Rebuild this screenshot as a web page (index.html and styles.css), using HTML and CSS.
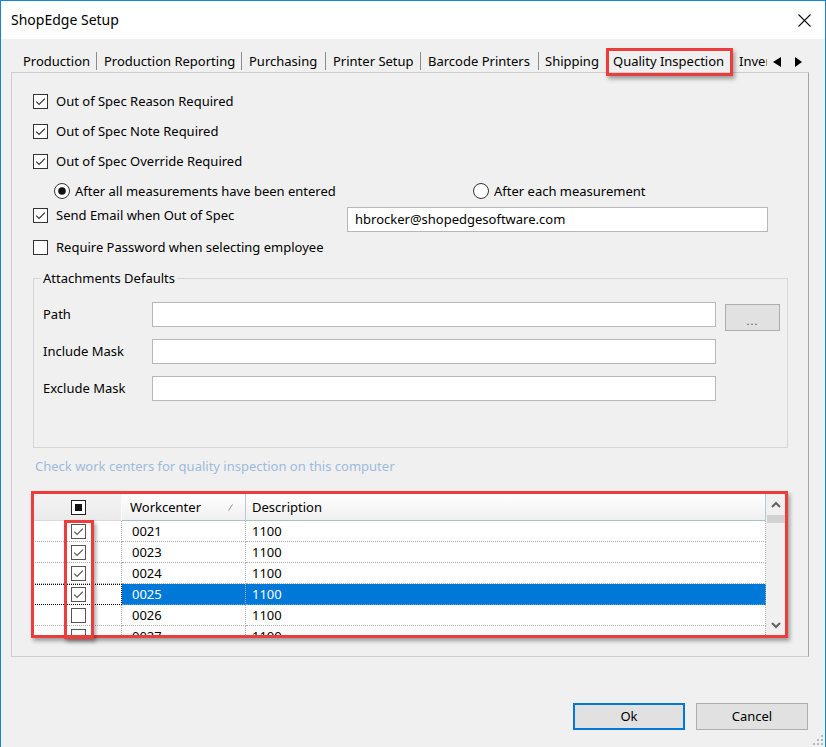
FILE: index.html
```html
<!DOCTYPE html>
<html>
<head>
<meta charset="utf-8">
<title>ShopEdge Setup</title>
<link rel="stylesheet" href="styles.css">
</head>
<body>
<div class="window">
  <div class="titlebar">
    <span class="title">ShopEdge Setup</span>
    <svg class="close" width="13" height="13" viewBox="0 0 13 13"><path d="M0.5 0.5L12.5 12.5M12.5 0.5L0.5 12.5" stroke="#111" stroke-width="1.1" fill="none"/></svg>
  </div>
  <div class="client">
    <div class="tabstrip">
      <div class="tabs">
        <div class="tab t1">Production</div>
        <div class="tab t2">Production Reporting</div>
        <div class="tab t3">Purchasing</div>
        <div class="tab t4">Printer Setup</div>
        <div class="tab t5">Barcode Printers</div>
        <div class="tab t6">Shipping</div>
        <div class="tab t7 sel">Quality Inspection<span class="mark mark-tab"></span></div>
        <div class="tab t8">Inventory</div>
      </div>
      <div class="tab-arrows">
        <svg width="8" height="10" viewBox="0 0 8 10"><polygon points="8,0 8,10 0,5" fill="#000"/></svg>
        <svg width="7" height="10" viewBox="0 0 7 10"><polygon points="0,0 0,10 7,5" fill="#000"/></svg>
      </div>
    </div>

    <div class="tabpage">
      <div class="opt">
        <span class="chk-label">
          <svg class="chk" width="15" height="15" viewBox="0 0 15 15"><rect x="0.5" y="0.5" width="14" height="14" fill="#fff" stroke="#333"/><path d="M3.2 7.6l2.9 2.9 5.8-5.8" fill="none" stroke="#333" stroke-width="1.2"/></svg>
          Out of Spec Reason Required
        </span>
      </div>
      <div class="opt">
        <span class="chk-label">
          <svg class="chk" width="15" height="15" viewBox="0 0 15 15"><rect x="0.5" y="0.5" width="14" height="14" fill="#fff" stroke="#333"/><path d="M3.2 7.6l2.9 2.9 5.8-5.8" fill="none" stroke="#333" stroke-width="1.2"/></svg>
          Out of Spec Note Required
        </span>
      </div>
      <div class="opt">
        <span class="chk-label">
          <svg class="chk" width="15" height="15" viewBox="0 0 15 15"><rect x="0.5" y="0.5" width="14" height="14" fill="#fff" stroke="#333"/><path d="M3.2 7.6l2.9 2.9 5.8-5.8" fill="none" stroke="#333" stroke-width="1.2"/></svg>
          Out of Spec Override Required
        </span>
      </div>
      <div class="opt radios">
        <span class="radio-label r1">
          <svg width="16" height="16" viewBox="0 0 16 16"><circle cx="8" cy="8" r="7.5" fill="#fff" stroke="#333"/><circle cx="8" cy="8" r="3.8" fill="#111"/></svg>
          After all measurements have been entered
        </span>
        <span class="radio-label r2">
          <svg width="16" height="16" viewBox="0 0 16 16"><circle cx="8" cy="8" r="7.5" fill="#fff" stroke="#333"/></svg>
          After each measurement
        </span>
      </div>
      <div class="email-row">
        <span class="chk-label email-label">
          <svg class="chk" width="15" height="15" viewBox="0 0 15 15"><rect x="0.5" y="0.5" width="14" height="14" fill="#fff" stroke="#333"/><path d="M3.2 7.6l2.9 2.9 5.8-5.8" fill="none" stroke="#333" stroke-width="1.2"/></svg>
          Send Email when Out of Spec
        </span>
        <div class="textbox email-box">hbrocker@shopedgesoftware.com</div>
      </div>
      <div class="opt">
        <span class="chk-label">
          <svg class="chk" width="15" height="15" viewBox="0 0 15 15"><rect x="0.5" y="0.5" width="14" height="14" fill="#fff" stroke="#333"/></svg>
          Require Password when selecting employee
        </span>
      </div>

      <fieldset class="group">
        <legend>Attachments Defaults</legend>
        <div class="att-grid">
          <span class="att-label">Path</span>
          <div class="textbox"></div>
          <div class="browse">...</div>
          <span class="att-label">Include Mask</span>
          <div class="textbox"></div>
          <span></span>
          <span class="att-label">Exclude Mask</span>
          <div class="textbox"></div>
          <span></span>
        </div>
      </fieldset>

      <div class="hint">Check work centers for quality inspection on this computer</div>

      <div class="gridwrap">
        <div class="grid">
          <div class="gbody">
            <div class="ghead">
              <div class="hc hc0">
                <svg width="15" height="15" viewBox="0 0 15 15"><rect x="0.5" y="0.5" width="14" height="14" fill="#fff" stroke="#222"/><rect x="4" y="4" width="7" height="7" fill="#111"/></svg>
              </div>
              <div class="hc hc1">Workcenter<svg class="sort" width="5" height="7" viewBox="0 0 5 7"><path d="M0.5 6.5L4.5 0.5" stroke="#8a8a8a" fill="none"/></svg></div>
              <div class="hc hc2">Description</div>
            </div>
            <div class="grow">
              <div class="gc gc0"><svg width="15" height="15" viewBox="0 0 15 15"><rect x="0.5" y="0.5" width="14" height="14" fill="#fff" stroke="#555"/><path d="M3.2 7.6l2.9 2.9 5.8-5.8" fill="none" stroke="#555" stroke-width="1.2"/></svg></div>
              <div class="gc gc1">0021</div>
              <div class="gc gc2">1100</div>
            </div>
            <div class="grow">
              <div class="gc gc0"><svg width="15" height="15" viewBox="0 0 15 15"><rect x="0.5" y="0.5" width="14" height="14" fill="#fff" stroke="#555"/><path d="M3.2 7.6l2.9 2.9 5.8-5.8" fill="none" stroke="#555" stroke-width="1.2"/></svg></div>
              <div class="gc gc1">0023</div>
              <div class="gc gc2">1100</div>
            </div>
            <div class="grow">
              <div class="gc gc0"><svg width="15" height="15" viewBox="0 0 15 15"><rect x="0.5" y="0.5" width="14" height="14" fill="#fff" stroke="#555"/><path d="M3.2 7.6l2.9 2.9 5.8-5.8" fill="none" stroke="#555" stroke-width="1.2"/></svg></div>
              <div class="gc gc1">0024</div>
              <div class="gc gc2">1100</div>
            </div>
            <div class="grow selected">
              <div class="gc gc0 focus"><svg width="15" height="15" viewBox="0 0 15 15"><rect x="0.5" y="0.5" width="14" height="14" fill="#fff" stroke="#555"/><path d="M3.2 7.6l2.9 2.9 5.8-5.8" fill="none" stroke="#555" stroke-width="1.2"/></svg></div>
              <div class="gc gc1">0025</div>
              <div class="gc gc2">1100</div>
            </div>
            <div class="grow">
              <div class="gc gc0"><svg width="15" height="15" viewBox="0 0 15 15"><rect x="0.5" y="0.5" width="14" height="14" fill="#fff" stroke="#555"/></svg></div>
              <div class="gc gc1">0026</div>
              <div class="gc gc2">1100</div>
            </div>
            <div class="grow">
              <div class="gc gc0"><svg width="15" height="15" viewBox="0 0 15 15"><rect x="0.5" y="0.5" width="14" height="14" fill="#fff" stroke="#555"/></svg></div>
              <div class="gc gc1">0027</div>
              <div class="gc gc2">1100</div>
            </div>
          </div>
          <div class="vscroll">
            <div class="sbtn"><svg width="10" height="7" viewBox="0 0 10 7"><path d="M1 6L5 2L9 6" fill="none" stroke="#606060" stroke-width="2"/></svg></div>
            <div class="thumb"></div>
            <div class="track"></div>
            <div class="sbtn"><svg width="10" height="7" viewBox="0 0 10 7"><path d="M1 1L5 5L9 1" fill="none" stroke="#606060" stroke-width="2"/></svg></div>
          </div>
        </div>
        <span class="mark mark-grid"></span>
        <span class="mark mark-col"></span>
      </div>
    </div>

    <div class="buttons">
      <div class="btn btn-default">Ok</div>
      <div class="btn">Cancel</div>
    </div>
  </div>
  <svg class="grip" width="10" height="10" viewBox="0 0 10 10">
    <rect x="8" y="0" width="2" height="2" fill="#b8b8b8"/>
    <rect x="4" y="4" width="2" height="2" fill="#b8b8b8"/>
    <rect x="8" y="4" width="2" height="2" fill="#b8b8b8"/>
    <rect x="0" y="8" width="2" height="2" fill="#b8b8b8"/>
    <rect x="4" y="8" width="2" height="2" fill="#b8b8b8"/>
    <rect x="8" y="8" width="2" height="2" fill="#b8b8b8"/>
  </svg>
</div>
</body>
</html>
```

FILE: styles.css
```css
* { box-sizing: border-box; }
html, body { margin: 0; padding: 0; }
body {
  width: 826px;
  height: 747px;
  overflow: hidden;
  background: #f0f0f0;
  font-family: "Noto Sans", "Liberation Sans", sans-serif;
  font-size: 13px;
  line-height: 18px;
  color: #000;
}
.window {
  position: relative;
  width: 826px;
  height: 747px;
  border: 1px solid #1883d7;
  border-bottom: 0;
  display: flex;
  flex-direction: column;
  background: #f0f0f0;
}
.titlebar {
  flex: none;
  height: 38px;
  background: #fff;
  display: flex;
  align-items: center;
  justify-content: space-between;
  padding: 0 14px 0 10px;
}
.title { font-size: 14px; line-height: 18px; }
.close { display: block; }

.client {
  flex: 1;
  display: flex;
  flex-direction: column;
  padding: 0 16px 0 10px;
}
.tabstrip {
  flex: none;
  height: 33px;
  display: flex;
  align-items: flex-end;
  padding-bottom: 2px;
}
.tabs { display: flex; margin-left: 5px; }
.tab {
  flex: none;
  position: relative;
  height: 18px;
  line-height: 18px;
  padding-left: 7px;
  white-space: nowrap;
  border-right: 1px solid #8c8c8c;
}
.t1 { width: 81px; }
.t2 { width: 145px; }
.t3 { width: 84px; }
.t4 { width: 95px; }
.t5 { width: 118px; }
.t6 { width: 67px; border-right: 0; padding-left: 6px; }
.t7 { width: 127px; border-right: 0; }
.t8 { width: 34px; border-right: 0; padding-left: 6px; overflow: hidden; }
.tab-arrows {
  display: flex;
  align-items: center;
  gap: 14px;
  height: 18px;
  margin-left: 6px;
  padding-top: 1px;
}
.tab-arrows svg { display: block; }

.mark {
  position: absolute;
  border: 3px solid #ec3d3d;
  box-shadow: 2px 3px 4px rgba(0, 0, 0, 0.35);
  pointer-events: none;
}
.mark-tab { left: 0; top: -4px; width: 127px; height: 28px; }

.tabpage {
  flex: none;
  width: 798px;
  height: 585px;
  border: 1px solid #cdcdcd;
  border-right-color: #a6a6a6;
  padding: 13px 19px 0 21px;
  display: flex;
  flex-direction: column;
}
.opt { display: flex; align-items: center; height: 30px; }
.chk-label { display: flex; align-items: center; gap: 8px; white-space: nowrap; }
.chk-label svg, .radio-label svg { flex: none; display: block; }
.radio-label { display: flex; align-items: center; gap: 5px; white-space: nowrap; }
.r1 { margin-left: 21px; width: 419px; }

.email-row { display: flex; align-items: flex-start; height: 26px; }
.email-label { width: 314px; }
.textbox {
  background: #fff;
  border: 1px solid #b7b7b7;
  height: 25px;
  line-height: 23px;
  padding-left: 7px;
  white-space: nowrap;
}
.email-box { width: 421px; margin-top: 1px; }

.group {
  margin: 7px 0 0;
  width: 755px;
  min-width: 0;
  border: 1px solid #d6d6d6;
  padding: 15px 7px 46px 9px;
}
.group legend {
  padding: 0 2px;
  margin-left: -2px;
  line-height: 18px;
}
.att-grid {
  display: grid;
  grid-template-columns: 100px 564px 55px;
  grid-template-rows: 25px 25px 25px;
  column-gap: 9px;
  row-gap: 12px;
}
.att-label { padding-top: 3px; white-space: nowrap; }
.browse {
  margin-top: 2px;
  height: 27px;
  background: #e1e1e1;
  border: 1px solid #adadad;
  text-align: center;
  font-size: 11px;
  line-height: 11px;
  padding-top: 10px;
  color: #555;
  letter-spacing: 1px;
}

.hint {
  margin-top: 9px;
  margin-left: 2px;
  color: #9dbbdc;
  white-space: nowrap;
}

.gridwrap {
  position: relative;
  margin-top: 19px;
  width: 753px;
  height: 141px;
}
.grid {
  display: flex;
  width: 753px;
  height: 141px;
  overflow: hidden;
  background: #fff;
}
.gbody { width: 733px; flex: none; }
.ghead { display: flex; height: 27px; }
.hc {
  height: 27px;
  display: flex;
  align-items: center;
  white-space: nowrap;
}
.hc0 {
  width: 89px;
  justify-content: center;
  background: linear-gradient(#f3f3f3, #ebebeb);
  border-right: 1px solid #fafafa;
  border-bottom: 1px solid #d9d9d9;
}
.hc0 svg { display: block; margin-left: 2px; }
.hc1, .hc2 {
  background: linear-gradient(#ffffff 0%, #f8f8f8 45%, #efefef 100%);
  border-right: 1px solid #b6cbca;
  border-bottom: 1px solid #a9c2c1;
}
.hc1 { width: 124px; padding: 0 12px 0 8px; justify-content: space-between; }
.hc2 { width: 520px; padding-left: 6px; }
.sort { display: block; }

.grow { display: flex; height: 21px; }
.gc {
  height: 21px;
  line-height: 20px;
  border-right: 1px dotted #b0b0b0;
  border-bottom: 1px dotted #b0b0b0;
  white-space: nowrap;
}
.gc0 { width: 89px; display: flex; align-items: center; justify-content: center; }
.gc0 svg { display: block; margin-left: 2px; }
.gc1 { width: 124px; padding-left: 10px; }
.gc2 { width: 520px; padding-left: 6px; }
.selected .gc1, .selected .gc2 { background: #0078d7; color: #fff; border-bottom-color: #5aa6e6; }
.gc0.focus { border: 1px dotted #000; }

.vscroll {
  flex: none;
  width: 20px;
  display: flex;
  flex-direction: column;
  background: #f0f0f0;
}
.sbtn { height: 20px; display: flex; align-items: center; justify-content: center; flex: none; }
.sbtn svg { display: block; }
.thumb { height: 8px; margin: 1px 1px 0 1px; background: #d2d2d2; flex: none; }
.track { flex: 1; }

.mark-grid { left: -2px; top: -3px; width: 757px; height: 147px; }
.mark-col { left: 31px; top: 26px; width: 30px; height: 119px; }

.buttons {
  display: flex;
  justify-content: flex-end;
  gap: 11px;
  margin-top: 46px;
  padding-right: 1px;
}
.btn {
  width: 112px;
  height: 27px;
  background: #e1e1e1;
  border: 1px solid #adadad;
  text-align: center;
  line-height: 25px;
}
.btn-default { border: 2px solid #0078d7; line-height: 23px; }

.grip { position: absolute; right: 2px; bottom: 2px; display: block; }
```
